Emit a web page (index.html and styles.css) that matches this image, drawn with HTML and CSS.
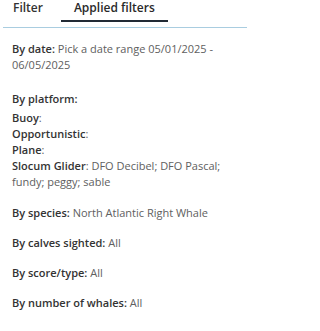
FILE: index.html
```html
<!DOCTYPE html>
<html lang="en">
<head>
<meta charset="utf-8">
<title>Applied filters</title>
<link rel="stylesheet" href="styles.css">
</head>
<body>
<div class="panel">
  <nav class="tabs">
    <span class="tab">Filter</span>
    <span class="tab tab--active">Applied filters</span>
  </nav>
  <div class="content">
    <p class="item item--date"><b>By date:</b> Pick a date range 05/01/2025 - 06/05/2025</p>
    <p class="item item--head"><b>By platform:</b></p>
    <div class="platforms">
      <div><b>Buoy</b>:</div>
      <div><b>Opportunistic</b>:</div>
      <div><b>Plane</b>:</div>
      <div><b>Slocum Glider</b>: DFO Decibel; DFO Pascal; fundy; peggy; sable</div>
    </div>
    <p class="item"><b>By species:</b> North Atlantic Right Whale</p>
    <p class="item"><b>By calves sighted:</b> All</p>
    <p class="item"><b>By score/type:</b> All</p>
    <p class="item"><b>By number of whales:</b> All</p>
  </div>
</div>
</body>
</html>
```

FILE: styles.css
```css
html, body {
  margin: 0;
  padding: 0;
  background: #ffffff;
}
body {
  font-family: "Open Sans", "Noto Sans", "Liberation Sans", sans-serif;
  color: #606060;
}
.panel {
  width: 251px;
}
.tabs {
  display: flex;
  gap: 5px;
  margin: 0 4px 0 3px;
  padding-bottom: 5px;
  border-bottom: 1px solid #a9cde0;
}
.tab {
  font-size: 12px;
  font-weight: 600;
  line-height: 16px;
  color: #333333;
  padding: 0 13px 4px 10px;
  border-bottom: 2px solid transparent;
}
.tab--active {
  color: #2a2a2a;
  padding: 0 13px 4px 13px;
  border-bottom-color: #222a35;
}
.content {
  padding: 13px 12px 0 12px;
  font-size: 11px;
  line-height: 16px;
}
.content b {
  font-weight: 600;
  color: #333333;
}
.item {
  margin: 0 0 14px 0;
}
.item--date {
  margin-bottom: 18px;
}
.item--head {
  margin-bottom: 3px;
}
.platforms {
  margin-bottom: 15px;
}
```
